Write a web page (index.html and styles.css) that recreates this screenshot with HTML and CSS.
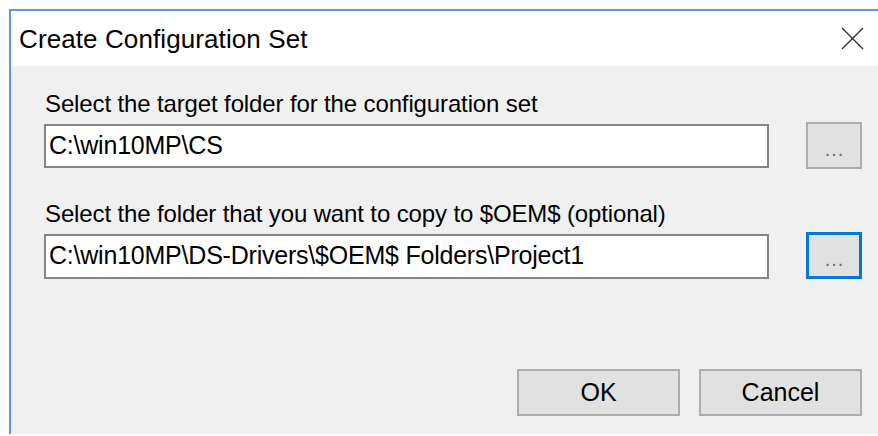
FILE: index.html
```html
<!DOCTYPE html>
<html lang="en">
<head>
<meta charset="utf-8">
<title>Create Configuration Set</title>
<link rel="stylesheet" href="styles.css">
</head>
<body>
<div class="window">
  <div class="titlebar">
    <span class="title">Create Configuration Set</span>
    <button class="close" aria-label="Close">
      <svg width="23" height="23" viewBox="0 0 23 23"><path d="M1 1 L22 22 M22 1 L1 22" stroke="#2b2b2b" stroke-width="1.3" fill="none"/></svg>
    </button>
  </div>
  <div class="client">
    <div class="field">
      <label class="label">Select the target folder for the configuration set</label>
      <div class="row">
        <div class="input">C:\win10MP\CS</div>
        <button class="browse">...</button>
      </div>
    </div>
    <div class="field second">
      <label class="label">Select the folder that you want to copy to $OEM$ (optional)</label>
      <div class="row">
        <div class="input">C:\win10MP\DS-Drivers\$OEM$ Folders\Project1</div>
        <button class="browse focused">...</button>
      </div>
    </div>
    <div class="actions">
      <button class="btn">OK</button>
      <button class="btn">Cancel</button>
    </div>
  </div>
</div>
</body>
</html>
```
FILE: styles.css
```css
html, body {
  margin: 0;
  padding: 0;
  background: #ffffff;
  height: 100%;
  overflow: hidden;
}

body {
  font-family: "Liberation Sans", Arial, sans-serif;
  color: #000;
}

.window {
  margin: 9px 0 0 9px;
  border-top: 2px solid #6396da;
  border-left: 2px solid #6396da;
  height: calc(100% - 11px);
  display: flex;
  flex-direction: column;
  box-sizing: border-box;
}

.titlebar {
  height: 55px;
  flex: none;
  background: #fff;
  display: flex;
  align-items: center;
  justify-content: space-between;
  padding-left: 8px;
}

.title {
  font-size: 26px;
  line-height: 28px;
  letter-spacing: 0.1px;
}

.close {
  border: 0;
  background: transparent;
  padding: 0;
  margin-right: 14px;
  width: 23px;
  height: 23px;
  display: block;
}

.close svg {
  display: block;
}

.client {
  flex: 1;
  background: #f0f0f0;
  padding: 24px 16px 0 33px;
  display: flex;
  flex-direction: column;
}

.label {
  display: block;
  font-size: 24px;
  line-height: 28px;
  padding-left: 1px;
  letter-spacing: -0.13px;
}

.row {
  display: grid;
  grid-template-columns: 725px 56px;
  column-gap: 37px;
  align-items: start;
  margin-top: 4px;
}

.input {
  box-sizing: border-box;
  height: 44px;
  margin-top: 2px;
  background: #fff;
  border: 2px solid #858585;
  padding: 0 0 0 3px;
  font-size: 25px;
  line-height: 38px;
  letter-spacing: -0.22px;
  white-space: nowrap;
  overflow: hidden;
}

.second {
  margin-top: 31px;
}

.second .input {
  height: 45px;
}

.browse {
  box-sizing: border-box;
  height: 47px;
  background: #e1e1e1;
  border: 2px solid #adadad;
  font-family: inherit;
  font-size: 20px;
  letter-spacing: 1px;
  color: #6a6a7e;
  padding: 0 0 6px 1px;
  display: flex;
  align-items: flex-end;
  justify-content: center;
}

.browse.focused {
  border: 3px solid #0078d7;
  padding-bottom: 5px;
}

.actions {
  display: flex;
  justify-content: flex-end;
  gap: 19px;
  margin-top: 90px;
}

.btn {
  box-sizing: border-box;
  width: 163px;
  height: 47px;
  background: #e1e1e1;
  border: 2px solid #adadad;
  font-family: inherit;
  font-size: 25px;
  color: #000;
  padding: 0;
}
```
